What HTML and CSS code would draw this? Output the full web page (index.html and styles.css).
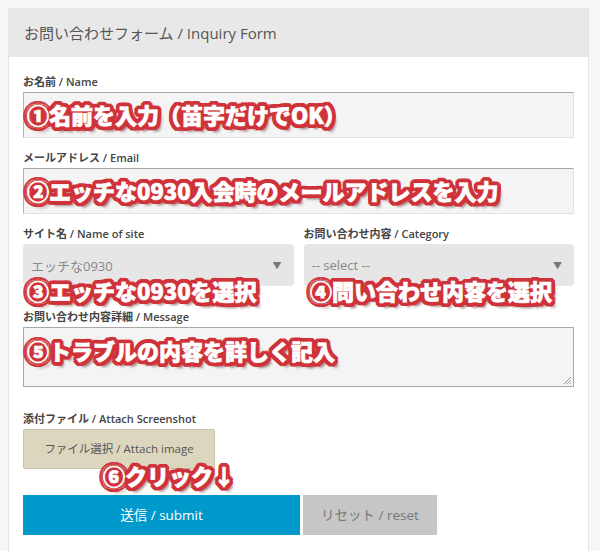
FILE: index.html
```html
<!DOCTYPE html>
<html lang="ja">
<head>
    <meta charset="UTF-8">
    <title>お問い合わせフォーム</title>
    <link rel="stylesheet" href="styles.css">
</head>
<body>
    <div class="card">
        <div class="cardHead">お問い合わせフォーム / Inquiry Form</div>
        <form class="cardBody">
            <div class="field">
                <label class="label">お名前 / Name</label>
                <div class="input"></div>
            </div>
            <div class="field">
                <label class="label">メールアドレス / Email</label>
                <div class="input"></div>
            </div>
            <div class="row">
                <div class="field wide">
                    <label class="label">サイト名 / Name of site</label>
                    <div class="select"><span class="value">エッチな0930</span><span class="arrow">▼</span></div>
                </div>
                <div class="field wide">
                    <label class="label">お問い合わせ内容 / Category</label>
                    <div class="select"><span class="value">-- select --</span><span class="arrow">▼</span></div>
                </div>
            </div>
            <div class="field">
                <label class="label">お問い合わせ内容詳細 / Message</label>
                <div class="textarea">
                    <svg class="grip" width="9" height="9" viewBox="0 0 9 9">
                        <path d="M8 1L1 8M8 4L4 8M8 7L7 8" stroke="#999" stroke-width="1"/>
                    </svg>
                </div>
            </div>
            <div class="field">
                <label class="label">添付ファイル / Attach Screenshot</label>
                <div class="attach">ファイル選択 / Attach image</div>
            </div>
            <div class="buttons">
                <div class="btn submit">送信 / submit</div>
                <div class="btn reset">リセット / reset</div>
            </div>
        </form>

        <!-- 入力ガイドの注釈 -->
        <span class="note n1">①名前を入力（苗字だけでOK）</span>
        <span class="note n2">②エッチな0930入会時のメールアドレスを入力</span>
        <span class="note n3">③エッチな0930を選択</span>
        <span class="note n4">④問い合わせ内容を選択</span>
        <span class="note n5">⑤トラブルの内容を詳しく記入</span>
        <span class="note n6">⑥クリック↓</span>
    </div>
</body>
</html>
```

FILE: styles.css
```css
*{
    margin: 0;
    padding: 0;
    box-sizing: border-box;
}
body{
    background: #f6f6f6;
    padding: 8px 0 0 8px;
    font-family: "Open Sans", "Noto Sans CJK JP", sans-serif;
    color: #444;
    overflow: hidden;
}
.card{
    position: relative;
    width: 581px;
    height: 543px;
    background: #fff;
    border: 1px solid #e4e4e4;
    border-bottom: none;
}
.cardHead{
    height: 48px;
    line-height: 48px;
    padding-left: 15px;
    background: #e8e8e8;
    font-size: 15px;
    color: #555;
}
.cardBody{
    padding: 17px 14px 0 14px;
}
.label{
    display: block;
    height: 16px;
    line-height: 16px;
    margin-bottom: 2px;
    font-size: 11px;
    font-weight: 600;
    color: #444;
}
.field{
    margin-bottom: 12px;
}
.input{
    height: 46px;
    background: #f4f4f4;
    border: 1px solid #e3e3e3;
    border-top-color: #a8a8a8;
    border-left-color: #b4b4b4;
}
.row{
    display: flex;
    gap: 10px;
    margin-bottom: 23px;
}
.row .field{
    flex: 1;
    margin-bottom: 0;
}
.select{
    height: 42px;
    display: flex;
    align-items: center;
    justify-content: space-between;
    padding: 0 12px 0 8px;
    background: #e6e6e6;
    border-radius: 4px;
    font-size: 13px;
    color: #888;
}
.arrow{
    font-size: 9px;
    color: #777;
}
.textarea{
    position: relative;
    height: 60px;
    background: #f4f4f4;
    border: 1px solid #a8a8a8;
    margin-bottom: 24px;
}
.grip{
    position: absolute;
    right: 1px;
    bottom: 1px;
}
.attach{
    width: 192px;
    height: 40px;
    line-height: 38px;
    text-align: center;
    background: #dcd6be;
    border: 1px solid #c8c1a7;
    border-radius: 2px;
    font-size: 11.5px;
    color: #555;
}
.buttons{
    display: flex;
    gap: 3px;
    margin-top: 26px;
}
.btn{
    height: 40px;
    line-height: 40px;
    text-align: center;
    font-size: 13.5px;
}
.submit{
    width: 277px;
    background: #0099cc;
    color: #fff;
}
.reset{
    width: 134px;
    background: #c6c6c6;
    color: #777;
}

/* 赤フチ白文字の注釈 */
.note{
    position: absolute;
    font-family: "Noto Sans CJK JP", sans-serif;
    font-size: 22px;
    font-weight: 900;
    line-height: 28px;
    color: #fff;
    white-space: nowrap;
    -webkit-text-stroke: 0.7px #fff;
    text-shadow:
        4px 0 0 #d0323a, -4px 0 0 #d0323a, 0 4px 0 #d0323a, 0 -4px 0 #d0323a,
        3px 3px 0 #d0323a, -3px 3px 0 #d0323a, 3px -3px 0 #d0323a, -3px -3px 0 #d0323a,
        4px 2px 0 #d0323a, -4px 2px 0 #d0323a, 4px -2px 0 #d0323a, -4px -2px 0 #d0323a,
        2px 4px 0 #d0323a, -2px 4px 0 #d0323a, 2px -4px 0 #d0323a, -2px -4px 0 #d0323a,
        4px 5px 3px rgba(60, 0, 0, 0.55);
}
.n1{ left: 18px; top: 91px; }
.n2{ left: 18px; top: 167px; }
.n3{ left: 18px; top: 267px; }
.n4{ left: 301px; top: 267px; }
.n5{ left: 18px; top: 327px; }
.n6{ left: 94px; top: 452px; }
```
